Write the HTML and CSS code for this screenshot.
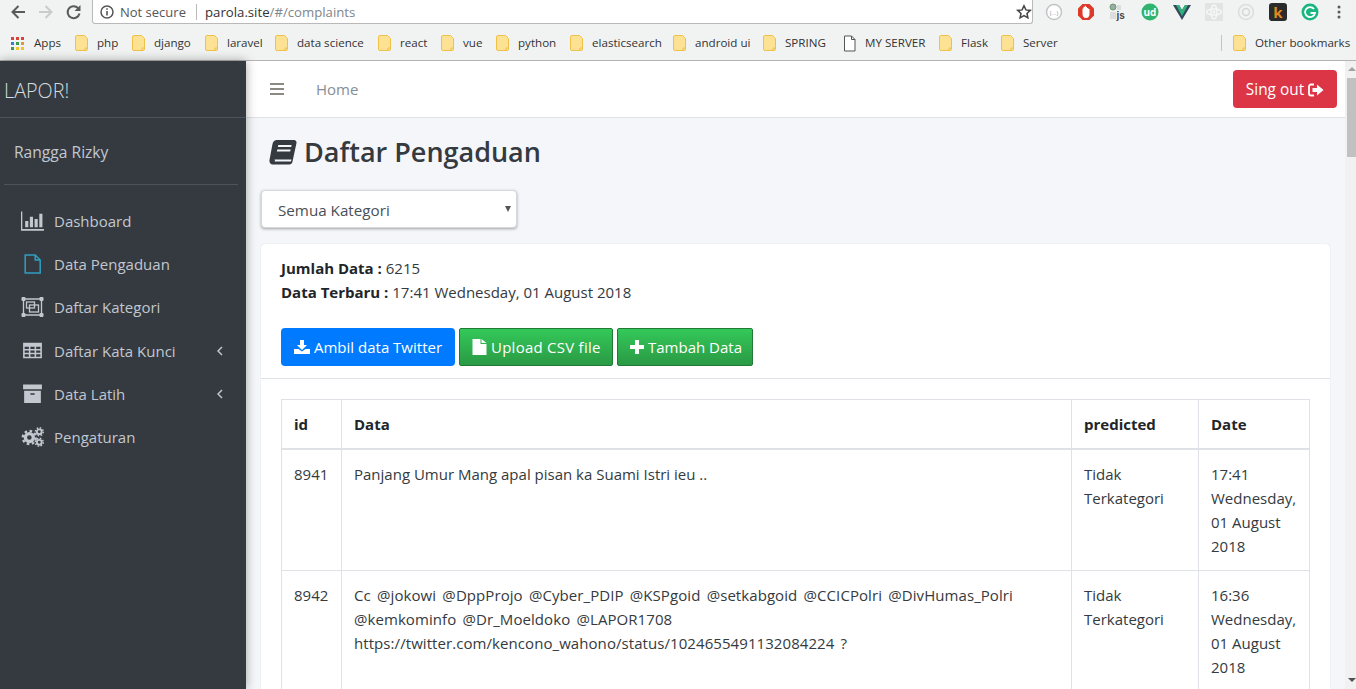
FILE: index.html
```html
<!DOCTYPE html>
<html lang="en">
<head>
<meta charset="utf-8">
<title>LAPOR!</title>
<link rel="stylesheet" href="styles.css">
</head>
<body>
<svg class="defs" width="0" height="0" aria-hidden="true">
  <symbol id="folder" viewBox="0 0 13 17"><path d="M.5 2A1.5 1.5 0 0 1 2 .5h7.5l3 3V14A1.5 1.5 0 0 1 11 15.500H2A1.500 1.500 0 0 1 .5 14Z" fill="#fde293" stroke="#efc14b"/><path d="M10 15.500v-2.500h2.500" fill="none" stroke="#efc14b"/></symbol>
</svg>
<header class="chrome">
  <div class="toolbar">
    <div class="navbtns">
      <svg class="navicon" viewBox="0 0 16 16"><path d="M15 8H3M8.500 2 2.500 8l6 6" fill="none" stroke="#5a5a5a" stroke-width="2"/></svg>
      <svg class="navicon" viewBox="0 0 16 16"><path d="M1 8h12M7.500 2l6 6-6 6" fill="none" stroke="#c9cccc" stroke-width="2"/></svg>
      <svg class="navicon" viewBox="0 0 16 16"><path d="M13.500 9.500A6 6 0 1 1 12 4" fill="none" stroke="#5a5a5a" stroke-width="2"/><path d="M14.500 1v6h-6Z" fill="#5a5a5a"/></svg>
    </div>
    <div class="omnibox">
      <svg class="info" viewBox="0 0 14 14"><circle cx="7" cy="7" r="6" fill="none" stroke="#555" stroke-width="1.500"/><path d="M6.200 6h1.600v4.500H6.200zM6.200 3.200h1.600v1.600H6.200z" fill="#555"/></svg>
      <span class="secure">Not secure</span>
      <span class="omnisep"></span>
      <span class="url">parola.site<span class="urlpath">/#/complaints</span></span>
      <svg class="star" viewBox="0 0 16 16"><path d="m8 1.800 1.900 4.100 4.400.5-3.300 3 .9 4.400L8 11.600l-3.900 2.200.9-4.400-3.300-3 4.400-.5Z" fill="none" stroke="#444" stroke-width="1.500"/></svg>
    </div>
    <div class="exts">
      <svg class="ext" viewBox="0 0 18 18"><circle cx="9" cy="9" r="7.500" fill="#fff" stroke="#c4c4c4" stroke-width="1.500"/><text x="9" y="11.500" text-anchor="middle" class="exttxt gray">{...}</text></svg>
      <svg class="ext" viewBox="0 0 18 18"><path d="M5.500 1h7L17 5.500v7L12.500 17h-7L1 12.500v-7Z" fill="#dd3a2a"/><path d="M5.500 7V5.500h1V4h1.200V2.800h1.200V4H10v1h1.300v1h1.200v5c0 2.500-1.500 4-3.500 4s-3.500-1.500-3.500-4Z" fill="#fff"/></svg>
      <svg class="ext" viewBox="0 0 18 18"><circle cx="4" cy="4" r="3" fill="#9aa" stroke="#6a9a6a"/><path d="M1 9h6v7H1Z" fill="#ddd"/><path d="M8 2h4v5H8Z" fill="#ddd"/><text x="7.500" y="16" class="extjs">js</text></svg>
      <svg class="ext" viewBox="0 0 18 18"><circle cx="9" cy="9" r="8.500" fill="#2fb36e"/><text x="9" y="13" text-anchor="middle" class="extud">ud</text></svg>
      <svg class="ext" viewBox="0 0 18 18"><path d="M0 2h6l3 5 3-5h6L9 17Z" fill="#35495e"/><path d="M3 2h3l3 5 3-5h3L9 13Z" fill="#2fb27c"/></svg>
      <svg class="ext" viewBox="0 0 18 18"><rect width="18" height="18" fill="#e2e4e4"/><g fill="none" stroke="#f7f7f7" stroke-width="1.400"><ellipse cx="9" cy="9" rx="7.500" ry="3"/><ellipse cx="9" cy="9" rx="3" ry="7"/></g><circle cx="9" cy="9" r="1.500" fill="#f7f7f7"/></svg>
      <svg class="ext" viewBox="0 0 18 18"><circle cx="9" cy="9" r="7.500" fill="#f1f3f2" stroke="#dcdcdc" stroke-width="1.500"/><circle cx="9" cy="9" r="3.500" fill="none" stroke="#d6d6d6" stroke-width="1.500"/></svg>
      <svg class="ext" viewBox="0 0 18 18"><rect width="18" height="18" rx="3" fill="#2b2b2b"/><text x="9" y="14.500" text-anchor="middle" class="extk">k</text></svg>
      <svg class="ext" viewBox="0 0 18 18"><circle cx="9" cy="9" r="8.500" fill="#19b77f"/><path d="M13 6a5 5 0 1 0 1 4H9.500" fill="none" stroke="#fff" stroke-width="1.800"/></svg>
      <svg class="dots" viewBox="0 0 4 16"><circle cx="2" cy="3" r="1.500" fill="#5a5a5a"/><circle cx="2" cy="8" r="1.500" fill="#5a5a5a"/><circle cx="2" cy="13" r="1.500" fill="#5a5a5a"/></svg>
    </div>
  </div>
  <nav class="bookmarks">
    <a class="bm"><svg class="apps" viewBox="0 0 13 13"><g fill="#d9443a"><rect width="3" height="3"/><rect x="5" width="3" height="3"/><rect x="10" width="3" height="3"/></g><rect y="5" width="3" height="3" fill="#2f7fd6"/><rect x="5" y="5" width="3" height="3" fill="#3a9b49"/><rect x="10" y="5" width="3" height="3" fill="#d69a3a"/><rect y="10" width="3" height="3" fill="#3a9b49"/><rect x="5" y="10" width="3" height="3" fill="#f0c330"/><rect x="10" y="10" width="3" height="3" fill="#f0c330"/></svg>Apps</a>
    <a class="bm"><svg class="folder"><use href="#folder"/></svg>php</a>
    <a class="bm"><svg class="folder"><use href="#folder"/></svg>django</a>
    <a class="bm"><svg class="folder"><use href="#folder"/></svg>laravel</a>
    <a class="bm"><svg class="folder"><use href="#folder"/></svg>data science</a>
    <a class="bm"><svg class="folder"><use href="#folder"/></svg>react</a>
    <a class="bm"><svg class="folder"><use href="#folder"/></svg>vue</a>
    <a class="bm"><svg class="folder"><use href="#folder"/></svg>python</a>
    <a class="bm"><svg class="folder"><use href="#folder"/></svg>elasticsearch</a>
    <a class="bm"><svg class="folder"><use href="#folder"/></svg>android ui</a>
    <a class="bm"><svg class="folder"><use href="#folder"/></svg>SPRING</a>
    <a class="bm"><svg class="folder" viewBox="0 0 13 17"><path d="M1.500 1h7l3.500 3.500V16H1.500ZM8.500 1v3.500H12" fill="#fff" stroke="#555"/></svg>MY SERVER</a>
    <a class="bm"><svg class="folder"><use href="#folder"/></svg>Flask</a>
    <a class="bm"><svg class="folder"><use href="#folder"/></svg>Server</a>
    <span class="bmsep"></span>
    <a class="bm"><svg class="folder"><use href="#folder"/></svg>Other bookmarks</a>
  </nav>
</header>

<div class="app">
  <aside class="sidebar">
    <div class="brand">LAPOR!</div>
    <div class="userpanel">Rangga Rizky</div>
    <ul class="menu">
      <li class="menuitem">
        <svg class="micon" viewBox="0 0 22 18"><path d="M.5 0v17.500H22" fill="none" stroke="#c2c7d0" stroke-width="1.500"/><path d="M4 9h3v6H4ZM8.500 5h3v10h-3ZM13 7h3v8h-3ZM17.500 2h3v13h-3Z" fill="#c2c7d0"/></svg>
        <span>Dashboard</span>
      </li>
      <li class="menuitem">
        <svg class="micon" viewBox="0 0 22 20"><path d="M3.700 1h10l5 5v13h-15ZM13.700 1v5h5" fill="none" stroke="#2f9fc0" stroke-width="1.500"/></svg>
        <span>Data Pengaduan</span>
      </li>
      <li class="menuitem">
        <svg class="micon" viewBox="0 0 22 20"><g fill="none" stroke="#c2c7d0" stroke-width="1.300"><path d="M2 2h18v16H2Z"/><rect x="5" y="5" width="8" height="6"/><rect x="8" y="8" width="9" height="7"/></g><g fill="#c2c7d0"><rect width="4" height="4" rx="1"/><rect x="18" width="4" height="4" rx="1"/><rect y="16" width="4" height="4" rx="1"/><rect x="18" y="16" width="4" height="4" rx="1"/></g></svg>
        <span>Daftar Kategori</span>
      </li>
      <li class="menuitem">
        <svg class="micon" viewBox="0 0 22 18"><path fill-rule="evenodd" d="M2 1h18v15H2ZM3.500 5v2.200h4V5ZM9 5v2.200h4V5ZM14.500 5v2.200h4V5ZM3.500 8.500v2.200h4V8.500ZM9 8.500v2.200h4V8.500ZM14.500 8.500v2.200h4V8.500ZM3.500 12v2.500h4V12ZM9 12v2.500h4V12ZM14.500 12v2.500h4V12Z" fill="#c2c7d0"/></svg>
        <span>Daftar Kata Kunci</span>
        <svg class="chev" viewBox="0 0 6 10"><path d="M5 1 1 5l4 4" fill="none" stroke="#c2c7d0" stroke-width="1.500"/></svg>
      </li>
      <li class="menuitem">
        <svg class="micon" viewBox="0 0 22 18"><path fill-rule="evenodd" d="M2 0h18v4.500H2ZM3 6h16v11.500H3ZM9 8.300v1.400h4V8.300Z" fill="#c2c7d0"/></svg>
        <span>Data Latih</span>
        <svg class="chev" viewBox="0 0 6 10"><path d="M5 1 1 5l4 4" fill="none" stroke="#c2c7d0" stroke-width="1.500"/></svg>
      </li>
      <li class="menuitem">
        <svg class="micon" viewBox="0 0 22 18"><g fill="none" stroke="#c2c7d0"><circle cx="8" cy="9.500" r="3.800" stroke-width="3.200"/><circle cx="8" cy="9.500" r="6.300" stroke-width="2.200" stroke-dasharray="2.500 2.450"/><circle cx="17.500" cy="4" r="2.300" stroke-width="1.800"/><circle cx="17.500" cy="4" r="3.800" stroke-width="1.400" stroke-dasharray="1.500 1.480"/><circle cx="17.500" cy="14" r="2.300" stroke-width="1.800"/><circle cx="17.500" cy="14" r="3.800" stroke-width="1.400" stroke-dasharray="1.500 1.480"/></g></svg>
        <span>Pengaturan</span>
      </li>
    </ul>
  </aside>

  <div class="content">
    <div class="topnav">
      <svg class="burger" viewBox="0 0 14 12"><path d="M0 0h14v2H0ZM0 5h14v2H0ZM0 10h14v2H0Z" fill="#8a8a82"/></svg>
      <a class="home">Home</a>
      <a class="signout">Sing out
        <svg class="btnicon" viewBox="0 0 16 14"><path d="M6 1.500H3A2 2 0 0 0 1 3.500v7a2 2 0 0 0 2 2h3" fill="none" stroke="#fff" stroke-width="1.800"/><path d="M4.500 5H9V1.500L15.500 7 9 12.500V9H4.500Z" fill="#fff"/></svg>
      </a>
    </div>
    <main class="page">
      <h1 class="title">
        <svg class="book" viewBox="0 0 28 25"><path d="M7.500 0H25a2.500 2.500 0 0 1 2.500 3l-4 18.500A3.500 3.500 0 0 1 20 24.500H4.500C2 24.500 0 23 .5 20L3.500 4A5 5 0 0 1 7.500 0Z" fill="#343a40"/><path d="M9.300 5h13.300l-.4 2H8.900ZM8.300 9.500h13.300l-.4 2H7.900Z" fill="#f4f6f9"/><path d="M5 19.500h17.500l-.6 2H5a1 1 0 0 0 0-2Z" fill="#f4f6f9"/></svg>
        Daftar Pengaduan
      </h1>
      <div class="selectwrap">
        <select class="select"><option>Semua Kategori</option></select>
      </div>
      <section class="card">
        <div class="cardhead">
          <p class="stat"><b>Jumlah Data :</b> 6215</p>
          <p class="stat"><b>Data Terbaru :</b> 17:41 Wednesday, 01 August 2018</p>
          <div class="actions">
            <a class="btn blue"><svg class="btnicon" viewBox="0 0 16 14"><path d="M6 0h4v5h3L8 10 3 5h3Z" fill="#fff"/><path d="M0 9h4.500L8 11.500 11.500 9H16v5H0Z" fill="#fff"/></svg>Ambil data Twitter</a>
            <a class="btn green wide"><svg class="fileicon" viewBox="0 0 14 16"><path d="M0 0h8v5h6v11H0ZM9 0l5 4H9Z" fill="#fff"/></svg>Upload CSV file</a>
            <a class="btn green"><svg class="plusicon" viewBox="0 0 14 14"><path d="M5 0h4v5h5v4H9v5H5V9H0V5h5Z" fill="#fff"/></svg>Tambah Data</a>
          </div>
        </div>
        <div class="cardbody">
          <table class="table">
            <colgroup><col class="c1"><col class="c2"><col class="c3"><col class="c4"></colgroup>
            <thead>
              <tr><th>id</th><th>Data</th><th>predicted</th><th>Date</th></tr>
            </thead>
            <tbody>
              <tr>
                <td>8941</td>
                <td>Panjang Umur Mang apal pisan ka Suami Istri ieu ..</td>
                <td>Tidak Terkategori</td>
                <td>17:41 Wednesday, 01 August 2018</td>
              </tr>
              <tr>
                <td>8942</td>
                <td class="tweet">Cc @jokowi @DppProjo @Cyber_PDIP @KSPgoid @setkabgoid @CCICPolri @DivHumas_Polri @kemkominfo @Dr_Moeldoko @LAPOR1708 https://twitter.com/kencono_wahono/status/1024655491132084224 ?</td>
                <td>Tidak Terkategori</td>
                <td>16:36 Wednesday, 01 August 2018</td>
              </tr>
            </tbody>
          </table>
        </div>
      </section>
    </main>
  </div>

  <div class="scrollbar">
    <span class="arrow up"></span>
    <span class="thumb"></span>
    <span class="arrow down"></span>
  </div>
</div>
</body>
</html>
```

FILE: styles.css
```css
* { box-sizing: border-box; }
html, body { margin: 0; height: 100%; }
body {
  width: 1356px;
  height: 689px;
  overflow: hidden;
  display: flex;
  flex-direction: column;
  font-family: "Open Sans", "Noto Sans", sans-serif;
  font-size: 15px;
  line-height: 24px;
  color: #343a40;
  background: #f4f6f9;
}
.defs { position: absolute; }

/* browser chrome */
.chrome { flex: none; height: 61px; background: #f1f3f2; border-bottom: 1px solid #b4b4b4; }
.toolbar { height: 30px; display: flex; }
.navbtns { width: 92px; height: 24px; padding-left: 10px; display: flex; align-items: center; gap: 12px; }
.navicon { width: 16px; height: 16px; }
.omnibox {
  width: 941px; height: 24px;
  display: flex; align-items: center;
  padding: 0 0 0 7px;
  background: #fff;
  border: 1px solid #b9b9b9; border-top: 0;
  border-radius: 0 0 3px 3px;
  font-size: 13px; color: #555;
}
.info { width: 14px; height: 14px; margin-right: 6px; }
.secure { width: 67px; white-space: nowrap; }
.omnisep { width: 1px; height: 16px; background: #b8b8b8; margin: 0 8px 0 9px; }
.url { flex: 1; color: #333; white-space: nowrap; font-size: 13.200px; }
.urlpath { color: #80868b; }
.star { width: 16px; height: 16px; }
.exts { flex: 1; height: 24px; display: flex; align-items: center; padding-left: 12px; gap: 14px; }
.ext { width: 18px; height: 18px; flex: none; }
.dots { width: 4px; height: 16px; margin-left: -1px; transform: translateX(5px); }
.exttxt { font: 6px "Liberation Sans", sans-serif; }
.gray { fill: #999; }
.extjs { font: bold 10px "Liberation Sans", sans-serif; fill: #444; }
.extud { font: bold 10px "Open Sans", sans-serif; fill: #fff; }
.extk { font: bold 15px "Open Sans", sans-serif; fill: #e08a1e; }

.bookmarks {
  height: 30px;
  padding: 0 0 4px 11px;
  display: grid;
  grid-template-columns: 64px 57px 73px 70px 103px 63px 55px 74px 103px 90px 80px 96px 62px 220px 1px 1fr;
  align-items: center;
  font-size: 11.600px;
  line-height: 16px;
  color: #333;
}
.bm { display: flex; align-items: center; white-space: nowrap; }
.bm:nth-last-of-type(1) { margin-left: 11px; }
.bmsep { width: 1px; height: 16px; background: #c4c4c4; }
.apps { width: 13px; height: 13px; margin-right: 10px; }
.folder { width: 13px; height: 17px; margin-right: 9px; flex: none; }

/* application */
.app { flex: 1; min-height: 0; display: flex; }
.sidebar {
  flex: none; width: 246px;
  background: #343a40;
  color: #c2c7d0;
  box-shadow: 0 0 10px rgba(0,0,0,.35);
  z-index: 1;
}
.brand {
  height: 57px;
  padding: 3px 0 0 4px;
  display: flex; align-items: center;
  border-bottom: 1px solid #4b545c;
  font-size: 19.800px; font-weight: 300;
  color: #d6dade;
}
.userpanel {
  height: 67px;
  margin: 0 8px 0 4px;
  padding: 1px 0 0 10px;
  display: flex; align-items: center;
  border-bottom: 1px solid #4b545c;
  font-size: 15.600px;
}
.menu { list-style: none; margin: 14px 0 0; padding: 0; }
.menuitem {
  height: 43.300px;
  padding: 0 23px 0 21px;
  display: flex; align-items: center;
  white-space: nowrap;
}
.micon { width: 23px; height: 20px; margin-right: 10px; flex: none; }
.chev { width: 6px; height: 10px; margin-left: auto; }

.content { flex: 1; min-width: 0; display: flex; flex-direction: column; }
.topnav {
  flex: none; height: 57px;
  padding: 0 8px 0 24px;
  background: #fff;
  border-bottom: 1px solid #dee2e6;
  display: flex; align-items: center;
}
.burger { width: 14px; height: 12px; margin-right: 32px; }
.home { color: #868e96; }
.signout {
  margin-left: auto;
  height: 38px; width: 104px;
  padding-top: 1px;
  display: flex; align-items: center; justify-content: center; gap: 4px;
  background: #dc3545; color: #fff;
  border-radius: 4px;
  font-size: 15.400px;
}
.btnicon { width: 16px; height: 14px; flex: none; }
.fileicon { width: 15px; height: 16px; flex: none; }
.plusicon { width: 14px; height: 14px; flex: none; }

.page { flex: 1; min-height: 0; padding: 0 15px; overflow: hidden; }
.title {
  margin: 14px 0 0 8px;
  height: 40px;
  display: flex; align-items: center; gap: 7px;
  font-size: 27px; line-height: 40px; font-weight: 600;
  color: #343a40;
}
.book { width: 28px; height: 25px; }
.selectwrap { margin-top: 18px; width: 256px; height: 38px; position: relative; }
.selectwrap::after {
  content: ""; position: absolute; right: 6px; top: 16px;
  border: 3px solid transparent; border-top: 6px solid #555; border-bottom: 0;
}
.select {
  appearance: none;
  width: 100%; height: 100%;
  padding: 2px 16px 0;
  background: #fff;
  border: 1px solid #d5d8dc;
  border-radius: 4px;
  box-shadow: 0 1px 3px rgba(0,0,0,.35);
  font: inherit; font-size: 15.200px; color: #495057;
}
.card {
  margin-top: 16px;
  background: #fff;
  border-radius: 4px;
  box-shadow: 0 0 1px rgba(0,0,0,.2);
}
.cardhead { height: 135px; padding: 12px 20px 0; border-bottom: 1px solid #dee2e6; }
.stat { margin: 0; color: #343a40; }
.stat b { font-weight: 700; color: #212529; }
.actions { margin-top: 24px; display: grid; grid-template-columns: 174px 154px 136px; gap: 4px; }
.btn {
  height: 38px; padding: 0 13px;
  display: flex; align-items: center; gap: 4px;
  color: #fff; border-radius: 4px;
  white-space: nowrap;
}
.blue { background: #007bff; }
.green {
  padding: 0 12px;
  background: linear-gradient(#34c859, #2a9a44);
  border: 1px solid #237a37;
  border-radius: 2px;
}
.wide { letter-spacing: .25px; }
.cardbody { padding: 20px; }
.table { width: 1028px; table-layout: fixed; border-collapse: collapse; color: #343a40; }
.c1 { width: 60px; }
.c2 { width: 730px; }
.c3 { width: 127px; }
.c4 { width: 111px; }
.table th, .table td { border: 1px solid #dee2e6; padding: 12px; text-align: left; vertical-align: top; }
.table th { border-bottom-width: 2px; color: #212529; font-weight: 700; }
.table .tweet { letter-spacing: .07px; word-spacing: 2.300px; }

.scrollbar { flex: none; width: 11px; background: #f1f1f1; display: flex; flex-direction: column; align-items: flex-end; }
.arrow { width: 9px; height: 17px; display: flex; }
.up::before { content: ""; margin: 6px auto 0; border: 4px solid transparent; border-bottom: 4px solid #a3a3a3; border-top: 0; height: 0; }
.down::before { content: ""; margin: 6px auto 0; border: 4px solid transparent; border-top: 4px solid #505050; border-bottom: 0; height: 0; }
.thumb { width: 9px; height: 79px; background: #c1c1c1; margin-bottom: auto; }
```
